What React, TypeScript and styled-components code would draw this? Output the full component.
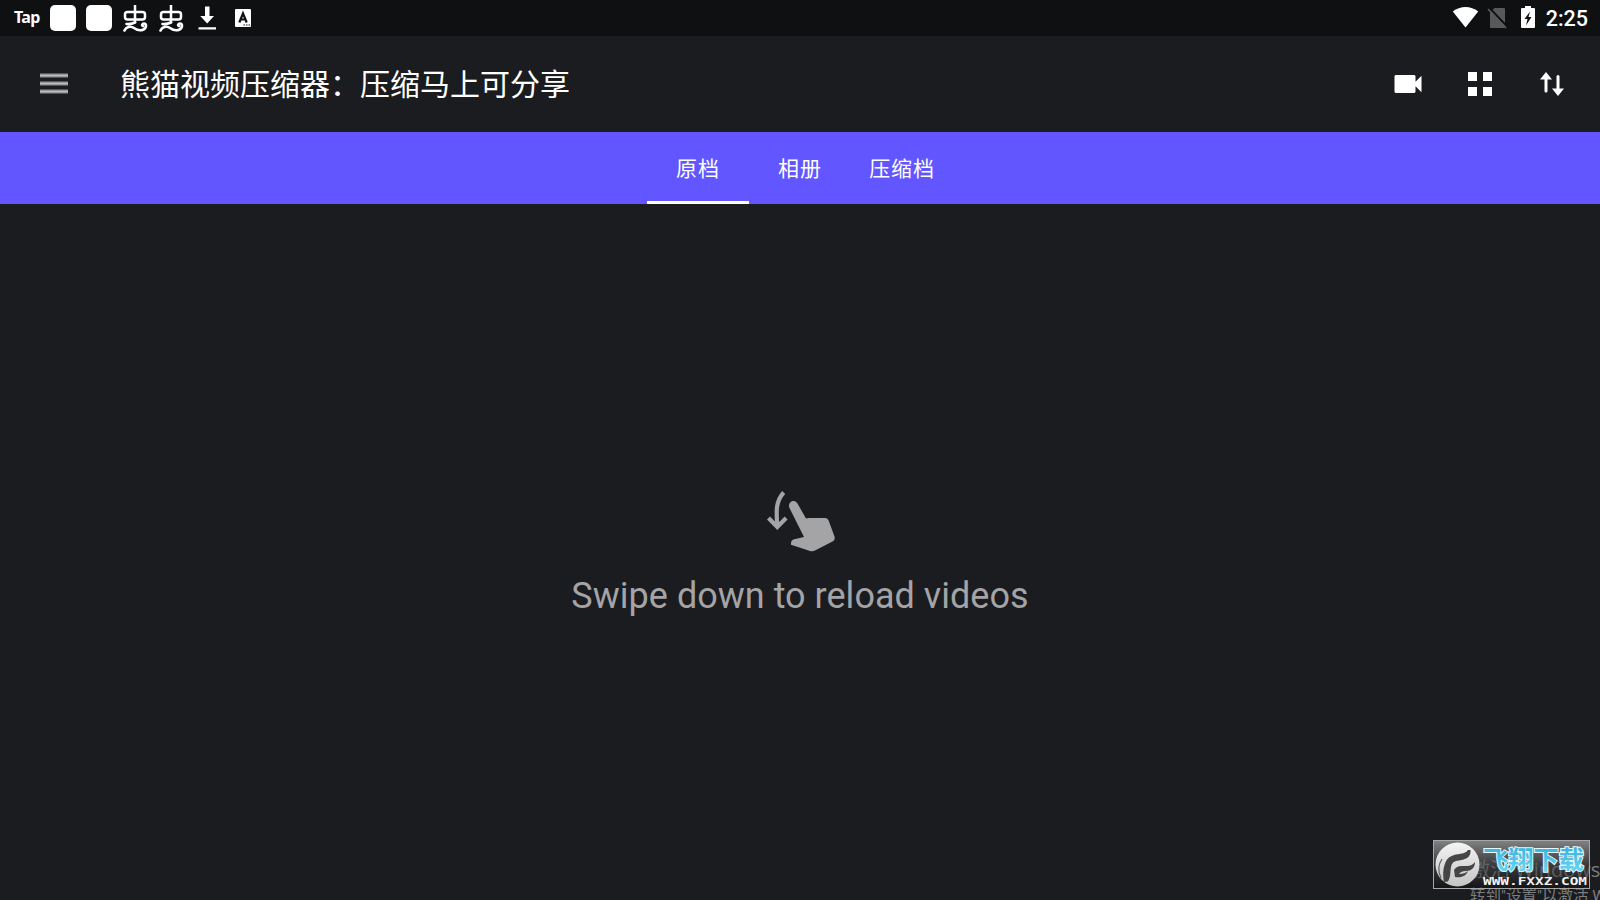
import React from 'react';
import styled, { createGlobalStyle } from 'styled-components';

const GlobalStyle = createGlobalStyle`
  * {
    box-sizing: border-box;
  }

  body {
    margin: 0;
    overflow: hidden;
    background: #1b1c20;
    font-family: Roboto, 'Noto Sans CJK SC', sans-serif;
  }
`;

const Screen = styled.div`
  display: flex;
  flex-direction: column;
  position: relative;
  width: 1600px;
  height: 900px;
  overflow: hidden;
  color: #fff;
  background: #1b1c20;
`;

const StatusBar = styled.header`
  display: flex;
  justify-content: space-between;
  align-items: center;
  height: 36px;
  padding: 0 12px 0 14px;
  background: #0f1012;
`;

const StatusGroup = styled.div<{ $gap: number }>`
  display: flex;
  align-items: center;
  gap: ${({ $gap }) => $gap}px;

  svg {
    display: block;
  }
`;

const TapLogo = styled.span`
  width: 26px;
  padding-bottom: 3px;
  font: 700 16px/18px 'Noto Sans', sans-serif;
  letter-spacing: -0.6px;
`;

const AppTile = styled.span`
  width: 26px;
  height: 26px;
  border-radius: 5px;
  background: #fff;
`;

const Clock = styled.time`
  padding-top: 1px;
  font-size: 21.5px;
  font-weight: 500;
  line-height: 35px;
`;

const Toolbar = styled.div`
  display: flex;
  align-items: center;
  height: 96px;
  padding: 0 30px 0 40px;
`;

const MenuButton = styled.div`
  display: flex;
  flex-direction: column;
  gap: 3px;
  width: 28px;
  margin-right: 52px;
  padding-bottom: 1px;

  span {
    height: 5px;
    background: linear-gradient(
      #55565a 0 1px,
      #98989b 1px 2px,
      #bcbcbe 2px 3px,
      #98989b 3px 4px,
      #55565a 4px
    );
  }
`;

const Title = styled.h1`
  flex: 1;
  margin: 0;
  padding-top: 2px;
  font-size: 30px;
  font-weight: 400;
  line-height: 40px;
`;

const Actions = styled.div`
  display: flex;
  gap: 36px;

  svg {
    display: block;
  }
`;

const Tabs = styled.nav`
  display: flex;
  justify-content: center;
  height: 72px;
  background: #6156ff;
`;

const Tab = styled.div<{ $active?: boolean }>`
  width: 102px;
  height: 72px;
  padding-top: 3px;
  border-bottom: 3px solid ${({ $active }) => ($active ? '#fff' : 'transparent')};
  font-size: 21px;
  line-height: 69px;
  letter-spacing: 0.9px;
  text-align: center;
`;

const EmptyState = styled.main`
  display: flex;
  flex: 1;
  flex-direction: column;
  align-items: center;
  padding-top: 276px;
  color: #a4a4a6;

  p {
    margin: 20px 0 0;
    font-size: 36px;
    line-height: 48px;
    letter-spacing: 0.02px;
  }
`;

const ActivationNotice = styled.div`
  position: absolute;
  top: 856px;
  left: 1470px;
  color: #7c7d7f;
  font: 15.5px/24px Roboto, 'Noto Sans CJK SC', sans-serif;
  white-space: nowrap;

  strong {
    display: block;
    font-family: 'Open Sans', 'Noto Sans CJK SC', sans-serif;
    font-size: 20px;
    font-weight: 400;
    line-height: 28px;
  }
`;

const SiteBadge = styled.div`
  position: absolute;
  top: 840px;
  left: 1433px;
  width: 157px;
  height: 49px;
  border: 1px solid #a8a8a8;
  background: linear-gradient(
    rgba(134, 134, 134, 0.95),
    rgba(80, 80, 80, 0.6) 50%,
    rgba(10, 10, 10, 0.4)
  );

  svg {
    display: block;
  }
`;

const WormIcon = () => (
  <svg width="26" height="28" viewBox="0 0 26 28" fill="none" stroke="#fff">
    <rect x="3" y="8" width="20" height="7.500" rx="2.500" strokeWidth="2.500" />
    <path d="M13 1v18" strokeWidth="2.500" />
    <path
      d="M4.500 20Q9 20.500 13 18.500M2.500 26.500C4 23 8.500 21.500 12 24S18 27.200 21.500 25.500C25 23.500 24.500 19.500 22 19.500C20 19.500 19.500 21.500 21 22"
      strokeWidth="2.600"
      strokeLinecap="round"
    />
  </svg>
);

const BadgeLogo = () => (
  <svg width="155" height="47" viewBox="0 0 155 47">
    <defs>
      <linearGradient id="disc" x1="0" y1="0" x2="0" y2="1">
        <stop offset="0" stopColor="#f4f4f4" />
        <stop offset="1" stopColor="#c4c4c4" />
      </linearGradient>
      <linearGradient id="brand" x1="0" y1="0" x2="0" y2="1">
        <stop offset="0" stopColor="#2fa9d8" />
        <stop offset="1" stopColor="#6fdcf6" />
      </linearGradient>
    </defs>
    <circle cx="23.500" cy="23.500" r="22" fill="url(#disc)" />
    <path
      d="M10 41C8.500 33 9 25 13 18.500c5-6 13-5 17-6.500q3-1 4-3h2.500c.5 6-3 9-9 10c-7 1-9.500 2-10.500 7c-1 6 0 9-3 14.500z"
      fill="#454545"
    />
    <path
      d="M20 29c3-5 8-4 13-4q5 0 8-4c0 6-4 9-9 9q-5 0-7 3c4 0 7-1 9-3c-2 5-6 7-13 6z"
      fill="#454545"
    />
    <path d="M8 18c-4 6-4 13-1 19" fill="none" stroke="#666" strokeWidth="1.300" />
    <text
      x="49"
      y="28"
      textLength="101"
      lengthAdjust="spacingAndGlyphs"
      fill="url(#brand)"
      stroke="#e4f7fd"
      strokeWidth="2"
      paintOrder="stroke"
      fontFamily="'Noto Sans CJK SC', sans-serif"
      fontSize="24.500"
      fontWeight="700"
    >
      飞翔下载
    </text>
    <text
      x="49"
      y="44"
      textLength="104"
      lengthAdjust="spacingAndGlyphs"
      fill="#f2f2f2"
      fontFamily="'DejaVu Sans Mono', monospace"
      fontSize="10.500"
      fontWeight="700"
    >
      WWW.FXXZ.COM
    </text>
  </svg>
);

const App: React.FC = () => {
  return (
    <>
      <GlobalStyle />
      <Screen>
        <StatusBar>
          <StatusGroup $gap={10}>
            <TapLogo>Tap</TapLogo>
            <AppTile />
            <AppTile />
            <WormIcon />
            <WormIcon />
            <svg width="26" height="26" viewBox="0 0 26 26" fill="#fff">
              <path d="M11 1.500h4.500V11h4.500L13.200 18.500l-7-7.500H11zM4.500 22.300h17.500v2.200H4.500z" />
            </svg>
            <svg width="26" height="26" viewBox="0 0 26 26">
              <rect x="5" y="4" width="16" height="18" rx="1" fill="#fff" />
              <path
                d="M9.300 17.500l3.700-9 3.700 9M10.500 14.500h5"
                fill="none"
                stroke="#111"
                strokeWidth="2.200"
              />
              <path d="M13.500 20h1.500M16 20h1.500M18.500 20h1.500" stroke="#111" />
            </svg>
          </StatusGroup>
          <StatusGroup $gap={8}>
            <svg width="27" height="24" viewBox="0 0 27 24" fill="#fff">
              <path d="M.8 5.500C8-.500 19-.500 26.200 5.500L13.500 21.500z" />
            </svg>
            <svg width="23" height="24" viewBox="0 0 23 24">
              <path d="M7.500 2h9.500q1 0 1 1v18q0 1-1 1H4q-1 0-1-1V6.500z" fill="#58595b" />
              <path d="M2 1.500l19 20" stroke="#0f1012" strokeWidth="2" />
              <path d="M1 3l18 19" stroke="#58595b" strokeWidth="1.800" />
            </svg>
            <svg width="20" height="24" viewBox="0 0 20 24">
              <path d="M7 0h6v2h3q1 0 1 1v18q0 1-1 1H4q-1 0-1-1V3q0-1 1-1h3z" fill="#fff" />
              <path d="M12 5.500L6.500 13h3l-1.500 6.500 5.500-8.500h-3z" fill="#111" />
            </svg>
            <Clock>2:25</Clock>
          </StatusGroup>
        </StatusBar>
        <Toolbar>
          <MenuButton>
            <span />
            <span />
            <span />
          </MenuButton>
          <Title>熊猫视频压缩器：压缩马上可分享</Title>
          <Actions>
            <svg width="36" height="36" viewBox="0 0 24 24" fill="#fff">
              <path d="M17 10.500V7c0-.55-.45-1-1-1H4c-.55 0-1 .45-1 1v10c0 .55.45 1 1 1h12c.55 0 1-.45 1-1v-3.500l4 4v-11l-4 4z" />
            </svg>
            <svg width="36" height="36" viewBox="0 0 36 36" fill="#fff">
              <path d="M6 6h9v9H6zM21 6h9v9h-9zM6 21h9v9H6zM21 21h9v9h-9z" />
            </svg>
            <svg width="36" height="36" viewBox="0 0 36 36" fill="none">
              <path
                d="M12 12v13M24 10.500v14"
                stroke="#fff"
                strokeWidth="3"
                strokeLinecap="round"
              />
              <path d="M6 13.500L12 6l6 7.500zM18 22.500h12L24 30z" fill="#fff" />
            </svg>
          </Actions>
        </Toolbar>
        <Tabs>
          <Tab $active>原档</Tab>
          <Tab>相册</Tab>
          <Tab>压缩档</Tab>
        </Tabs>
        <EmptyState>
          <svg width="72" height="72" viewBox="0 0 72 72">
            <path
              d="M19.700 12.500C12 21 12 30 13.300 46M4.500 38l8.800 9 8.800-9"
              fill="none"
              stroke="#a4a4a6"
              strokeWidth="4.200"
            />
            <path
              d="M25.500 28C23 22 30.500 18 33.500 23.500L42 38.500q1-.500 3-.500H61q2.800 0 3.800 3L70.500 56.500q1 3.500-2 5L51 70.500q-2.500 1.300-5 .500L27 64.800v-1.500q0-3.200 3.300-4L40 57z"
              fill="#a4a4a6"
            />
          </svg>
          <p>Swipe down to reload videos</p>
        </EmptyState>
        <ActivationNotice>
          <strong>激活 Windows</strong>
          转到"设置"以激活 Windows
        </ActivationNotice>
        <SiteBadge>
          <BadgeLogo />
        </SiteBadge>
      </Screen>
    </>
  );
};

export default App;
